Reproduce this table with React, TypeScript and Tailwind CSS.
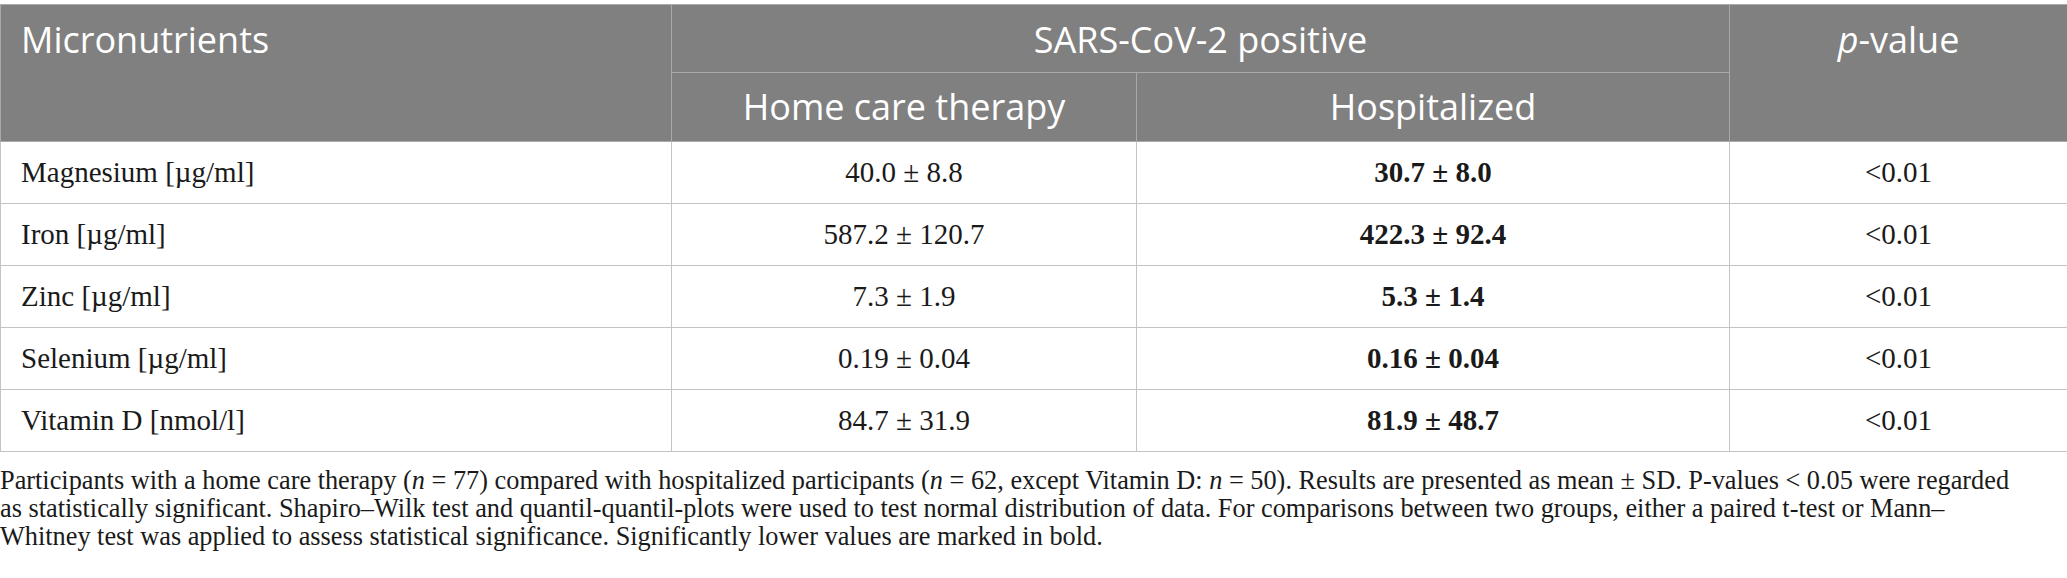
const rows = [
  { name: 'Magnesium [µg/ml]', home: '40.0 ± 8.8', hosp: '30.7 ± 8.0', p: '<0.01' },
  { name: 'Iron [µg/ml]', home: '587.2 ± 120.7', hosp: '422.3 ± 92.4', p: '<0.01' },
  { name: 'Zinc [µg/ml]', home: '7.3 ± 1.9', hosp: '5.3 ± 1.4', p: '<0.01' },
  { name: 'Selenium [µg/ml]', home: '0.19 ± 0.04', hosp: '0.16 ± 0.04', p: '<0.01' },
  { name: 'Vitamin D [nmol/l]', home: '84.7 ± 31.9', hosp: '81.9 ± 48.7', p: '<0.01' },
];

export default function App() {
  return (
    <div className="w-[2067px] bg-white pt-[4px]">
      {/* Table */}
      <table className="w-[2067px] table-fixed border-collapse">
        <colgroup>
          <col className="w-[671px]" />
          <col className="w-[465px]" />
          <col className="w-[593px]" />
          <col className="w-[338px]" />
        </colgroup>
        <thead className="bg-[#7f807f] text-white font-['Open_Sans',sans-serif] text-[36px] leading-[44px] font-normal">
          <tr className="h-[68px]">
            <th rowSpan={2} className="border border-[#a9a9a9] px-[20px] pt-[13px] text-left align-top font-normal">
              Micronutrients
            </th>
            <th colSpan={2} className="border border-[#a9a9a9] pt-[13px] pb-[9px] text-center align-top font-normal">
              SARS-CoV-2 positive
            </th>
            <th rowSpan={2} className="border border-[#a9a9a9] pt-[13px] text-center align-top font-normal">
              <i>p</i>-value
            </th>
          </tr>
          <tr className="h-[69px]">
            <th className="border border-[#a9a9a9] text-center font-normal">Home care therapy</th>
            <th className="border border-[#a9a9a9] text-center font-normal">Hospitalized</th>
          </tr>
        </thead>
        <tbody className="font-['Liberation_Serif',serif] text-[29px] text-[#1a1a1a]">
          {rows.map((r) => (
            <tr key={r.name} className="h-[62px]">
              <td className="border border-[#c4c4c4] px-[20px]">{r.name}</td>
              <td className="border border-[#c4c4c4] text-center">{r.home}</td>
              <td className="border border-[#c4c4c4] text-center font-bold">{r.hosp}</td>
              <td className="border border-[#c4c4c4] text-center">{r.p}</td>
            </tr>
          ))}
        </tbody>
      </table>

      {/* Footnote */}
      <p className="mt-[15px] whitespace-nowrap font-['Liberation_Serif',serif] text-[26.3px] leading-[28px] text-[#1a1a1a]">
        Participants with a home care therapy (<i>n</i> = 77) compared with hospitalized participants (<i>n</i> = 62, except Vitamin D: <i>n</i> = 50). Results are presented as mean ± SD. P-values &lt; 0.05 were regarded
        <br />
        as statistically significant. Shapiro–Wilk test and quantil-quantil-plots were used to test normal distribution of data. For comparisons between two groups, either a paired t-test or Mann–
        <br />
        Whitney test was applied to assess statistical significance. Significantly lower values are marked in bold.
      </p>
    </div>
  );
}
